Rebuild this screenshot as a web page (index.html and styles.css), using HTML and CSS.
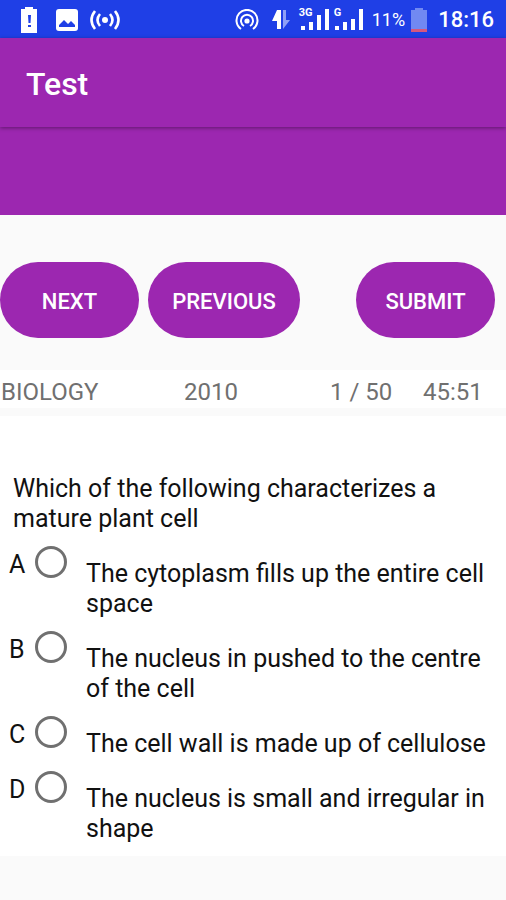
FILE: index.html
```html
<!DOCTYPE html>
<html lang="en">
<head>
<meta charset="utf-8">
<meta name="viewport" content="width=device-width, initial-scale=1">
<title>Test</title>
<link rel="stylesheet" href="styles.css">
</head>
<body>
<div class="status">
  <div class="status-group status-left">
    <svg width="18" height="26" viewBox="0 0 18 26" aria-hidden="true"><path fill="#fff" d="M5 0h8v2h4v24H1V2h4z"/><path fill="#1f3fe6" d="M8 8h3l-.5 8h-2zM8 18h3v2H8z"/></svg>
    <svg width="22" height="22" viewBox="0 0 22 22" aria-hidden="true"><rect width="22" height="22" rx="3" fill="#fff"/><path fill="#1f3fe6" d="M3 18v-2l5-5 4 4 3-3 4 4v2z"/></svg>
    <svg width="30" height="22" viewBox="0 0 30 22" fill="none" stroke="#fff" stroke-width="2.600" aria-hidden="true"><circle cx="15" cy="11" r="3" fill="#fff" stroke="none"/><path d="M10 5q-5 6 0 12M5 2q-7 9 0 18M20 5q5 6 0 12M25 2q7 9 0 18"/></svg>
  </div>
  <div class="status-group status-right">
    <svg width="24" height="22" viewBox="0 0 24 22" fill="none" stroke="#fff" stroke-width="2" aria-hidden="true"><circle cx="12" cy="12" r="2.600" fill="#fff" stroke="none"/><path d="M9 17a6 6 0 1 1 6 0M6 20a10.500 10.500 0 1 1 12 0"/></svg>
    <svg class="arrows" width="20" height="22" viewBox="0 0 20 22" aria-hidden="true"><path fill="#fff" d="M6 1h4v19H6v-8H1z"/><path fill="#8fa0f6" d="M12 1h3v10h4l-7 9z"/></svg>
    <div class="signals">
      <div class="signal"><span class="net">3G</span><svg width="30" height="24" viewBox="0 0 30 24" fill="#fff" aria-hidden="true"><path d="M2 18h4v4H2zM10 14h4v8h-4zM18 7h4v15h-4zM26 1h4v21h-4z"/></svg></div>
      <div class="signal"><span class="net">G</span><svg width="30" height="24" viewBox="0 0 30 24" fill="#fff" aria-hidden="true"><path d="M1 18h4v4H1zM9 14h4v8H9zM17 11h4v11h-4zM25 1h4v21h-4z"/></svg></div>
    </div>
    <span class="percent">11%</span>
    <svg class="battery" width="16" height="24" viewBox="0 0 16 24" aria-hidden="true"><path fill="#7189f2" d="M4 0h8v2h4v22H0V2h4z"/><path fill="#d4577f" d="M0 21h16v3H0z"/></svg>
    <time class="clock">18:16</time>
  </div>
</div>
<header class="appbar"><h1>Test</h1></header>
<div class="banner"></div>
<main>
  <div class="actions">
    <button type="button">NEXT</button>
    <button type="button" class="previous">PREVIOUS</button>
    <button type="button" class="submit">SUBMIT</button>
  </div>
  <div class="info">
    <span>BIOLOGY</span><span>2010</span><span>1 / 50</span><span>45:51</span>
  </div>
  <form class="card">
    <fieldset>
      <legend>Which of the following characterizes a mature plant cell</legend>
      <label class="option"><span class="letter">A</span><input type="radio" name="answer" value="A"><span class="answer">The cytoplasm fills up the entire cell space</span></label>
      <label class="option"><span class="letter">B</span><input type="radio" name="answer" value="B"><span class="answer">The nucleus in pushed to the centre of the cell</span></label>
      <label class="option"><span class="letter">C</span><input type="radio" name="answer" value="C"><span class="answer">The cell wall is made up of cellulose</span></label>
      <label class="option"><span class="letter">D</span><input type="radio" name="answer" value="D"><span class="answer">The nucleus is small and irregular in shape</span></label>
    </fieldset>
  </form>
</main>
</body>
</html>
```
FILE: styles.css
```css
* { box-sizing: border-box; }
body { margin: 0; background: #fafafa; color: #111; font-family: Roboto, "Liberation Sans", sans-serif; }
.status { height: 38px; padding: 1px 12px 0 20px; display: flex; align-items: center; justify-content: space-between; background: #1f3fe6; color: #fff; }
.status-group { display: flex; align-items: center; }
.status-left { gap: 18px; }
.status-left svg + svg + svg { margin-left: -6px; }
.arrows { margin-left: 12px; }
.signals { display: flex; gap: 5px; margin-left: 8px; }
.signal { position: relative; height: 24px; }
.signal svg { display: block; }
.net { position: absolute; top: -1px; left: 0; font-size: 11px; line-height: 12px; font-weight: 700; }
.percent { margin-left: 8px; font-size: 18px; }
.battery { margin-left: 6px; }
.clock { margin-left: 11px; font-size: 22px; font-weight: 500; }
.appbar { position: relative; height: 89px; padding: 2px 26px 0; display: flex; align-items: center; background: #9c27b0; color: #fff; box-shadow: 0 1px 4px rgba(0, 0, 0, .4); }
.appbar h1 { margin: 0; font-size: 32px; font-weight: 500; }
.banner { height: 88px; background: #9c27b0; }
.actions { display: flex; gap: 9px; padding: 47px 11px 32px 0; }
.actions button { height: 76px; min-width: 139px; padding: 2px 23px 0; border: 0; border-radius: 38px; background: #9c27b0; color: #fff; font: 500 22px Roboto, "Liberation Sans", sans-serif; }
.actions .previous { min-width: 152px; }
.actions .submit { margin-left: auto; }
.info { display: grid; grid-template-columns: 183fr 146fr 93fr 83fr; height: 38px; align-items: center; background: #fff; color: #707070; font-size: 24px; padding: 5px 0 0 1px; }
.info span { white-space: nowrap; }
.card { margin-top: 8px; padding-top: 58px; background: #fff; font-size: 25px; line-height: 30px; }
fieldset { margin: 0; padding: 0; border: 0; min-width: 0; }
legend { padding: 0 13px 12px; }
.option { display: grid; grid-template-columns: 26px 32px 1fr; align-items: start; padding: 0 8px 12px 9px; }
.letter { padding-top: 4px; }
.option input { appearance: none; width: 32px; height: 32px; margin: 0; border: 3px solid #707070; border-radius: 50%; background: #fff; }
.option input:checked { background: radial-gradient(circle, #9c27b0 50%, #fff 55%); }
.answer { padding: 13px 0 0 19px; }
```
